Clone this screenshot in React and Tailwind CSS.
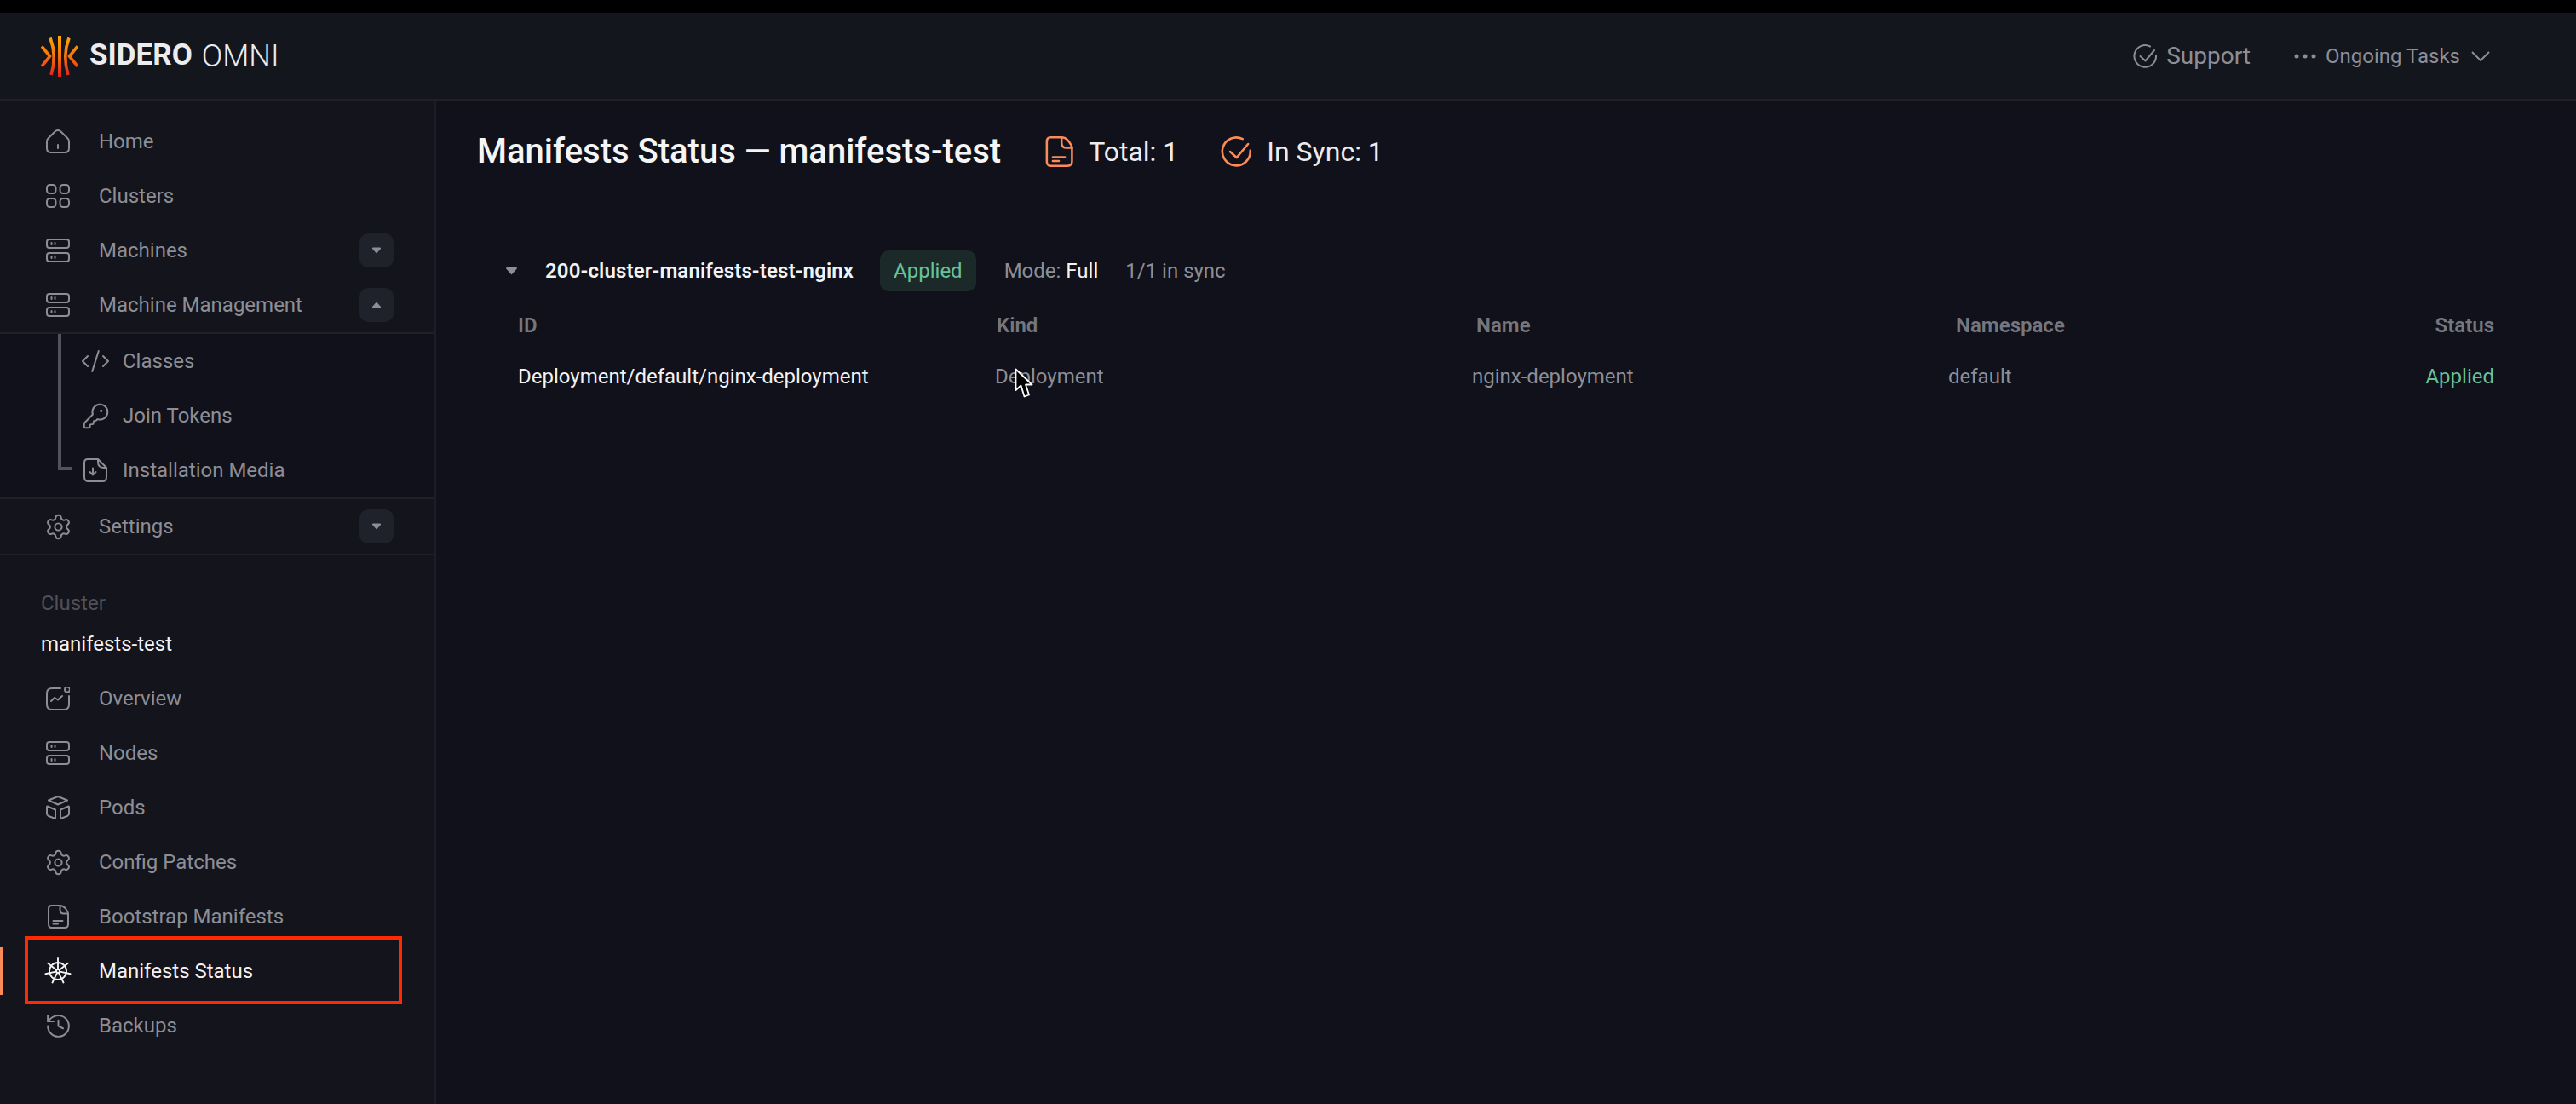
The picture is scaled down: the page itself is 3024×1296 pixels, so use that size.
import { Settings, History, KeyRound, CodeXml } from "lucide-react"

const Svg = ({ className = "w-7 h-7", children }) => (
  <svg viewBox="0 0 28 28" fill="none" stroke="currentColor" strokeWidth="2" strokeLinecap="round" strokeLinejoin="round" className={`${className} shrink-0`}>
    {children}
  </svg>
)

const HomeIcon = () => (
  <Svg>
    <path d="M2.5 10.5 10.5 2.5Q14-.5 17.5 2.5L25.5 10.5Q27 12 27 14V22Q27 27 22 27H6Q1 27 1 22V14Q1 12 2.5 10.5Z" />
    <path d="M14 18v4" />
  </Svg>
)

const GridIcon = () => (
  <Svg>
    <rect x="1" y="1" width="10.5" height="10" rx="3.5" />
    <rect x="16.5" y="1" width="10.5" height="10" rx="3.5" />
    <rect x="1" y="17" width="10.5" height="10" rx="3.5" />
    <rect x="16.5" y="17" width="10.5" height="10" rx="3.5" />
  </Svg>
)

const ServerIcon = () => (
  <Svg>
    <rect x="1" y="1" width="26" height="10" rx="3" />
    <rect x="1" y="17" width="26" height="10" rx="3" />
    <path d="M6.5 5v2M10.5 5v2M6.5 21v2M10.5 21v2" />
  </Svg>
)

const MediaIcon = () => (
  <Svg>
    <path d="M5 1H17V4Q17 11 24 11H27V22Q27 27 22 27H6Q1 27 1 22V5Q1 1 5 1ZM17 1 27 11" />
    <path d="M11 11.5v8M7.5 16l3.5 3.5 3.5-3.5" />
  </Svg>
)

const OverviewIcon = () => (
  <Svg>
    <path d="M17 2H7Q1 2 1 8V21Q1 27 7 27H21Q27 27 27 21V11" />
    <circle cx="25" cy="3.5" r="3" />
    <path d="M6 17 10 13 14 15.5 19 11" />
  </Svg>
)

const PodsIcon = () => (
  <Svg>
    <path d="M14 1 25 5.5 14 10.5 3 5.5Z" />
    <path d="M1.5 12.5 11 16.5V27L3 24Q1 23 1 21V13Z" />
    <path d="M26.5 12.5 17 16.5V27L25 24Q27 23 27 21V13Z" />
  </Svg>
)

const FileIcon = ({ className }) => (
  <Svg className={className}>
    <path d="M6.5 1H16Q20 1 22.5 4L24 6Q26 8.5 26 11V23Q26 27 22 27H6.5Q3 27 3 23V5Q3 1 6.5 1Z" />
    <path d="M16.5 1V6Q16.5 10.5 21 10.5H26" />
    <path d="M8.5 19H19.5M8.5 22.5H14" />
  </Svg>
)

const HelmIcon = () => (
  <svg viewBox="0 0 32 32" fill="none" stroke="currentColor" strokeWidth="1.9" strokeLinecap="round" className="w-8 h-8 -mx-0.5 shrink-0">
    <circle cx="16" cy="16" r="10" />
    <circle cx="16" cy="16" r="2" />
    <path d="M16 1V13.5M27.7 6.65 18 14.4M30.6 19.3 18.4 16.6M22.5 29.5 17.1 18.3M9.5 29.5 14.9 18.3M1.4 19.3 13.6 16.6M4.3 6.65 14 14.4" />
  </svg>
)

const CheckCircle = ({ className }) => (
  <svg viewBox="0 0 28 28" fill="none" stroke="currentColor" strokeWidth="2" strokeLinecap="round" strokeLinejoin="round" className={`${className} shrink-0`}>
    <path d="M20 2.5A12.8 12.8 0 1 0 27 13" />
    <path d="M8.5 14 14.5 19.5 25 7" />
  </svg>
)

const Logo = () => (
  <svg viewBox="0 0 44 48" fill="none" className="w-11 h-12 shrink-0">
    <defs>
      <linearGradient id="sidero" x1="0" y1="0" x2="0" y2="48" gradientUnits="userSpaceOnUse">
        <stop offset="0" stopColor="#ffa800" />
        <stop offset="0.5" stopColor="#f7720c" />
        <stop offset="1" stopColor="#e41f1f" />
      </linearGradient>
    </defs>
    <g stroke="url(#sidero)" strokeWidth="3.6">
      <path d="M1 12.5 10.5 24 1 36" />
      <path d="M43 12.5 33.5 24 43 36" />
      <path d="M11 2.5Q19 24 12 46" />
      <path d="M33 2.5Q25 24 32 46" />
      <path d="M22 0V48" strokeWidth="4" />
    </g>
  </svg>
)

const Caret = ({ up }) => (
  <button className="w-10 h-10 rounded-[10px] bg-[#20222b] flex items-center justify-center">
    <svg viewBox="0 0 12 8" className="w-3 h-2 fill-[#8d8e95]">
      {up ? <path d="M6 .5 11 6Q11.5 7.5 10 7.5H2Q.5 7.5 1 6Z" /> : <path d="M6 7.5 11 2Q11.5 .5 10 .5H2Q.5 .5 1 2Z" />}
    </svg>
  </button>
)

const NavItem = ({ icon, label, caret, active }) => (
  <div className={`relative h-16 flex items-center pl-[54px] pr-12 text-[24px] ${active ? "text-[#f2f2f3]" : "text-[#8d8e95]"}`}>
    {icon}
    <span className="ml-[34px] flex-1">{label}</span>
    {caret && <Caret up={caret === "up"} />}
    {active && (
      <>
        <div className="absolute left-0 top-[4px] w-1 h-[56px] bg-[#fb8b57]" />
        <div className="absolute left-[29px] top-[-9px] w-[443px] h-[80px] border-4 border-[#ff2a00]" />
      </>
    )}
  </div>
)

const SubItem = ({ icon, label }) => (
  <div className="h-16 flex items-center pl-[98px] text-[24px] text-[#8d8e95]">
    {icon}
    <span className="ml-[18px]">{label}</span>
  </div>
)

const Sidebar = () => (
  <aside className="w-[512px] shrink-0 border-r-2 border-[#1c1d26] bg-[#13141c] pt-[16px]">
    <NavItem icon={<HomeIcon />} label="Home" />
    <NavItem icon={<GridIcon />} label="Clusters" />
    <NavItem icon={<ServerIcon />} label="Machines" caret="down" />
    <NavItem icon={<ServerIcon />} label="Machine Management" caret="up" />
    <div className="relative border-y-2 border-[#1f2029] bg-[#10111a]">
      <div className="absolute left-[68px] top-0 w-4 h-[160px] border-l-4 border-b-4 border-[#52525c]" />
      <SubItem icon={<CodeXml className="w-9 h-9 -mx-1 shrink-0" strokeWidth={1.35} />} label="Classes" />
      <SubItem icon={<KeyRound className="w-[33px] h-[33px] -mx-[2.5px] shrink-0" strokeWidth={1.45} />} label="Join Tokens" />
      <SubItem icon={<MediaIcon />} label="Installation Media" />
    </div>
    <NavItem icon={<Settings className="w-[33px] h-[33px] -mx-[2.5px] shrink-0" strokeWidth={1.45} />} label="Settings" caret="down" />
    <div className="border-t-2 border-[#1f2029] pt-[40px] pl-[48px] text-[24px]">
      <div className="h-8 leading-8 text-[#4f5059]">Cluster</div>
      <div className="h-8 leading-8 mt-4 text-[#f2f2f3]">manifests-test</div>
    </div>
    <div className="mt-[16px]">
      <NavItem icon={<OverviewIcon />} label="Overview" />
      <NavItem icon={<ServerIcon />} label="Nodes" />
      <NavItem icon={<PodsIcon />} label="Pods" />
      <NavItem icon={<Settings className="w-[33px] h-[33px] -mx-[2.5px] shrink-0" strokeWidth={1.45} />} label="Config Patches" />
      <NavItem icon={<FileIcon className="w-7 h-7" />} label="Bootstrap Manifests" />
      <NavItem icon={<HelmIcon />} label="Manifests Status" active />
      <NavItem icon={<History className="w-[33px] h-[33px] -mx-[2.5px] shrink-0" strokeWidth={1.45} />} label="Backups" />
    </div>
  </aside>
)

const Header = () => (
  <header className="h-[103px] shrink-0 flex items-center justify-between border-b-2 border-[#1f2029] bg-[#14161e] pl-[48px] pr-[101px]">
    <div className="flex items-center text-[35px] text-[#ececee]">
      <Logo />
      <span className="ml-[13px] font-bold">SIDERO</span>
      <span className="ml-[11px] text-[36px] font-light">OMNI</span>
    </div>
    <div className="flex items-center text-[#8d8e95]">
      <CheckCircle className="w-7 h-7" />
      <span className="ml-[11px] text-[28px]">Support</span>
      <svg viewBox="0 0 26 6" className="ml-[51px] w-[26px] h-[6px] fill-current">
        <circle cx="3" cy="3" r="2.5" />
        <circle cx="13" cy="3" r="2.5" />
        <circle cx="23" cy="3" r="2.5" />
      </svg>
      <span className="ml-[11px] text-[24px]">Ongoing Tasks</span>
      <svg viewBox="0 0 22 12" fill="none" stroke="currentColor" strokeWidth="2" className="ml-[13px] w-[22px] h-3">
        <path d="M1 1 11 11 21 1" />
      </svg>
    </div>
  </header>
)

const Main = () => (
  <main className="relative flex-1 bg-[#10111a] pl-[48px] pr-[96px]">
    <div className="flex items-center h-[120px]">
      <h1 className="text-[40px] font-medium text-[#f5f5f6]">Manifests Status — manifests-test</h1>
      <FileIcon className="w-9 h-9 ml-[50px] text-[#fb8b57]" />
      <span className="ml-[17px] text-[32px] text-[#ececee]">Total: 1</span>
      <CheckCircle className="w-9 h-9 ml-[50px] text-[#fb8b57]" />
      <span className="ml-[18px] text-[32px] text-[#ececee]">In Sync: 1</span>
    </div>
    <div className="mt-[56px] pl-[33px]">
      <div className="flex items-center h-12 text-[24px]">
        <svg viewBox="0 0 12 8" className="w-[15px] h-[10px] fill-[#8d8e95]">
          <path d="M6 7.5 11 2Q11.5 .5 10 .5H2Q.5 .5 1 2Z" />
        </svg>
        <span className="ml-[32px] font-semibold tracking-[0.13px] text-[#f2f2f3]">200-cluster-manifests-test-nginx</span>
        <span className="ml-[31px] h-12 px-4 rounded-[10px] flex items-center bg-[#1b2a28] text-[#69c297]">Applied</span>
        <span className="ml-[33px] text-[#8d8e95]">Mode: <span className="text-[#f2f2f3]">Full</span></span>
        <span className="ml-[32px] text-[#8d8e95]">1/1 in sync</span>
      </div>
      <div className="grid grid-cols-[562px_563px_563px_1fr_auto] mt-[24px] h-8 leading-8 pl-[15px] text-[24px] font-semibold text-[#75767e]">
        <div>ID</div>
        <div>Kind</div>
        <div>Name</div>
        <div>Namespace</div>
        <div className="text-right">Status</div>
      </div>
      <div className="grid grid-cols-[560px_560px_559px_1fr_auto] mt-[28px] h-8 leading-8 pl-[15px] text-[24px] text-[#8d8e95]">
        <div className="text-[#f2f2f3]">Deployment/default/nginx-deployment</div>
        <div>Deployment</div>
        <div>nginx-deployment</div>
        <div>default</div>
        <div className="text-right text-[#69c297]">Applied</div>
      </div>
    </div>
    {/* mouse pointer caught in the shot */}
    <svg viewBox="0 0 22 36" className="absolute left-[679px] top-[314px] w-[22px] h-9">
      <path d="M1.5 1.5V26L7.5 20.5 11.5 33.5 17 31.5 13 19.5H20.5Z" fill="#000" stroke="#fff" strokeWidth="1.8" strokeLinejoin="round" />
    </svg>
  </main>
)

export default function App() {
  return (
    <div className="w-[3024px] h-[1296px] flex flex-col overflow-hidden bg-black pt-[15px] font-['Roboto',sans-serif]">
      <Header />
      <div className="flex flex-1 min-h-0">
        <Sidebar />
        <Main />
      </div>
    </div>
  )
}
